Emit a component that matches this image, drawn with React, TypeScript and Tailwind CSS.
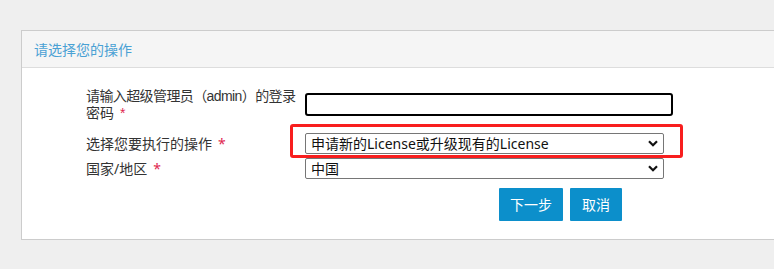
import React from "react";

function Chevron() {
  return (
    <svg width="10" height="7" viewBox="0 0 10 7" className="shrink-0">
      <path d="M1 1.2 5 5.2 9 1.2" fill="none" stroke="#111" strokeWidth="2.2" />
    </svg>
  );
}

function FakeSelect({ value }: { value: string }) {
  return (
    <div className="flex h-[21px] w-[359px] shrink-0 items-center justify-between rounded-[2px] border border-[#767676] bg-white pl-[5px] pr-[5px] text-[14px] leading-[19px] text-[#111]">
      <span className="whitespace-nowrap">{value}</span>
      <Chevron />
    </div>
  );
}

function Req() {
  return <span className="ml-[6px] text-[#e0284f]">*</span>;
}

export default function App() {
  return (
    <div
      className="relative h-[269px] w-[774px] overflow-hidden bg-[#efefef] pt-[30px] pl-[21px]"
      style={{ fontFamily: '"Noto Sans", "Noto Sans CJK SC", sans-serif' }}
    >
      <div className="w-[800px] border border-[#cccccc] bg-white">
        <div className="flex h-[37px] items-center border-b border-[#dddddd] bg-[#f5f5f5] pl-[12px] text-[14px] text-[#4aa1d4]">
          请选择您的操作
        </div>
        <div className="h-[171px] pl-[64px] pt-[20px] text-[14px] text-[#333]">
          <div className="flex items-start">
            <label
              className="flex w-[219px] shrink-0 flex-col whitespace-nowrap leading-[17px]"
              style={{ fontFamily: '"Liberation Sans", "Noto Sans CJK SC", sans-serif' }}
            >
              <span className="tracking-[-0.6px]">请输入超级管理员（admin）的登录</span>
              <span>
                密码
                <Req />
              </span>
            </label>
            <input
              type="password"
              className="mt-[5px] h-[23px] w-[368px] shrink-0 rounded-[3px] border-2 border-black bg-white outline-none"
            />
          </div>
          <div className="mt-[11px] flex items-center">
            <label className="w-[219px] shrink-0 whitespace-nowrap leading-[16px]">
              选择您要执行的操作
              <Req />
            </label>
            <FakeSelect value="申请新的License或升级现有的License" />
          </div>
          <div className="mt-[4px] flex items-center">
            <label className="w-[219px] shrink-0 whitespace-nowrap leading-[16px]">
              国家/地区
              <Req />
            </label>
            <FakeSelect value="中国" />
          </div>
          <div className="mt-[9px] flex gap-[7px] pl-[413px]">
            <button className="h-[33px] w-[64px] rounded-[1px] bg-[#0c8fcb] text-[14px] text-white">下一步</button>
            <button className="h-[33px] w-[52px] rounded-[1px] bg-[#0c8fcb] text-[14px] text-white">取消</button>
          </div>
        </div>
      </div>
      <div className="pointer-events-none absolute left-[290px] top-[124px] h-[34px] w-[393px] rounded-[3px] border-[3px] border-[#f81e1e]" />
    </div>
  );
}
